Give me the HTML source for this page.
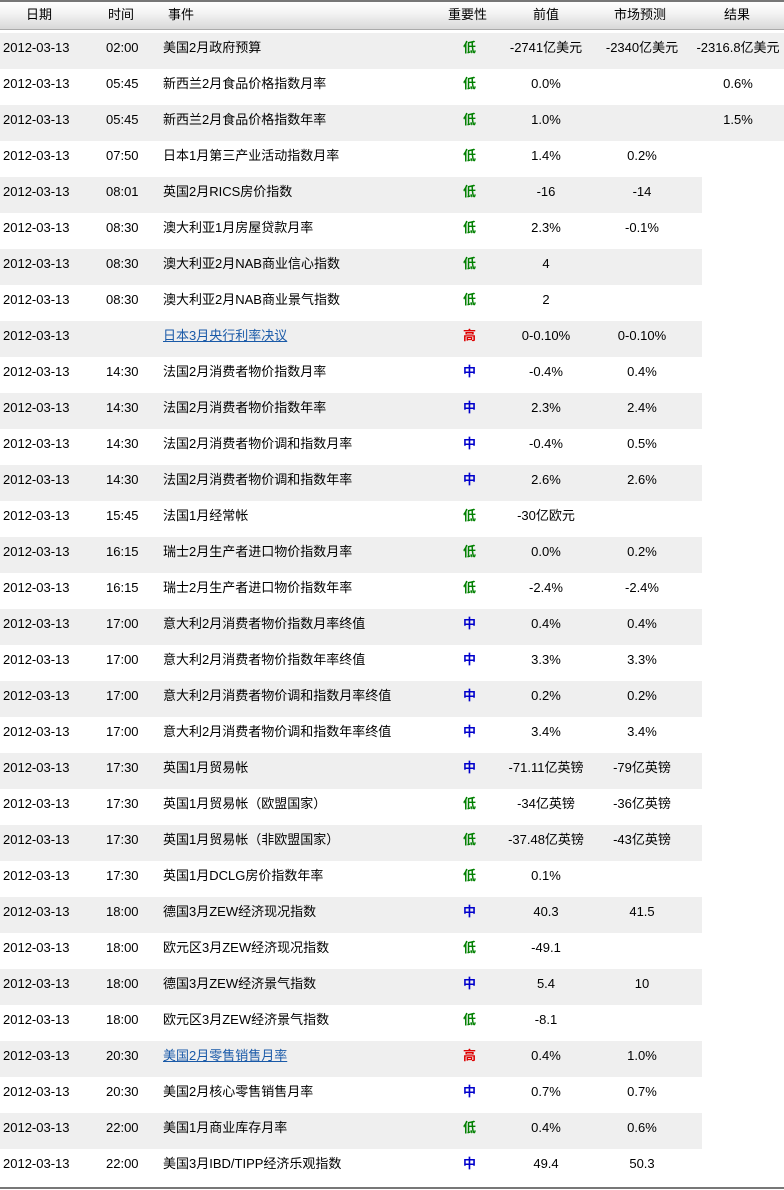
<!DOCTYPE html><html><head><meta charset="utf-8"><style>
body{margin:0;width:784px;height:1190px;background:#fff;font-family:"Liberation Sans","Noto Sans CJK SC",sans-serif;font-size:13px;color:#000;position:relative;overflow:hidden}
.hd{position:absolute;left:0;top:0;width:784px;height:30px;border-top:2px solid #777;background:linear-gradient(#fff,#f4f4f4 40%,#d8d8d8);border-bottom:1px solid #aaa;box-sizing:border-box}
.r{position:absolute;left:0;height:36px;width:784px}
.g{background:#efefef}
.c{position:absolute;top:0;line-height:29px;white-space:nowrap}
.l{color:#008000;font-weight:bold}.m{color:#0000cc;font-weight:bold}.h{color:#d00;font-weight:bold}
a{color:#1a5aa8;text-decoration:underline}
.bot{position:absolute;left:0;top:1187px;width:784px;height:2px;background:#777}
</style></head><body>
<div class="hd">
<div class="c" style="left:26px;top:-1px;line-height:28px">日期</div>
<div class="c" style="left:108px;top:-1px;line-height:28px">时间</div>
<div class="c" style="left:168px;top:-1px;line-height:28px">事件</div>
<div class="c" style="left:448px;top:-1px;line-height:28px">重要性</div>
<div class="c" style="left:533px;top:-1px;line-height:28px">前值</div>
<div class="c" style="left:614px;top:-1px;line-height:28px">市场预测</div>
<div class="c" style="left:724px;top:-1px;line-height:28px">结果</div>
</div>
<div id="t"></div>
<div class="bot"></div>
<script>
var d=[
["02:00","美国2月政府预算","l","-2741亿美元","-2340亿美元","-2316.8亿美元"],
["05:45","新西兰2月食品价格指数月率","l","0.0%","","0.6%"],
["05:45","新西兰2月食品价格指数年率","l","1.0%","","1.5%"],
["07:50","日本1月第三产业活动指数月率","l","1.4%","0.2%"],
["08:01","英国2月RICS房价指数","l","-16","-14"],
["08:30","澳大利亚1月房屋贷款月率","l","2.3%","-0.1%"],
["08:30","澳大利亚2月NAB商业信心指数","l","4",""],
["08:30","澳大利亚2月NAB商业景气指数","l","2",""],
["","<a>日本3月央行利率决议</a>","h","0-0.10%","0-0.10%"],
["14:30","法国2月消费者物价指数月率","m","-0.4%","0.4%"],
["14:30","法国2月消费者物价指数年率","m","2.3%","2.4%"],
["14:30","法国2月消费者物价调和指数月率","m","-0.4%","0.5%"],
["14:30","法国2月消费者物价调和指数年率","m","2.6%","2.6%"],
["15:45","法国1月经常帐","l","-30亿欧元",""],
["16:15","瑞士2月生产者进口物价指数月率","l","0.0%","0.2%"],
["16:15","瑞士2月生产者进口物价指数年率","l","-2.4%","-2.4%"],
["17:00","意大利2月消费者物价指数月率终值","m","0.4%","0.4%"],
["17:00","意大利2月消费者物价指数年率终值","m","3.3%","3.3%"],
["17:00","意大利2月消费者物价调和指数月率终值","m","0.2%","0.2%"],
["17:00","意大利2月消费者物价调和指数年率终值","m","3.4%","3.4%"],
["17:30","英国1月贸易帐","m","-71.11亿英镑","-79亿英镑"],
["17:30","英国1月贸易帐（欧盟国家）","l","-34亿英镑","-36亿英镑"],
["17:30","英国1月贸易帐（非欧盟国家）","l","-37.48亿英镑","-43亿英镑"],
["17:30","英国1月DCLG房价指数年率","l","0.1%",""],
["18:00","德国3月ZEW经济现况指数","m","40.3","41.5"],
["18:00","欧元区3月ZEW经济现况指数","l","-49.1",""],
["18:00","德国3月ZEW经济景气指数","m","5.4","10"],
["18:00","欧元区3月ZEW经济景气指数","l","-8.1",""],
["20:30","<a>美国2月零售销售月率</a>","h","0.4%","1.0%"],
["20:30","美国2月核心零售销售月率","m","0.7%","0.7%"],
["22:00","美国1月商业库存月率","l","0.4%","0.6%"],
["22:00","美国3月IBD/TIPP经济乐观指数","m","49.4","50.3"]];
var L={l:"低",m:"中",h:"高"},h="";
d.forEach(function(r,i){
var top=33+i*36;
h+='<div class="r'+(i%2==0?' g':'')+'" style="top:'+top+'px'+(i%2==0&&i>=3?';width:702px':'')+'">'+
'<div class="c" style="left:3px">2012-03-13</div>'+
'<div class="c" style="left:106px">'+r[0]+'</div>'+
'<div class="c" style="left:163px">'+r[1]+'</div>'+
'<div class="c '+r[2]+'" style="left:463px">'+L[r[2]]+'</div>'+
'<div class="c" style="left:496px;width:100px;text-align:center">'+r[3]+'</div>'+
'<div class="c" style="left:592px;width:100px;text-align:center">'+(r[4]||'')+'</div>'+
(r[5]?'<div class="c" style="left:688px;width:100px;text-align:center">'+r[5]+'</div>':'')+
'</div>';});
document.getElementById('t').innerHTML=h;
</script>
</body></html>
